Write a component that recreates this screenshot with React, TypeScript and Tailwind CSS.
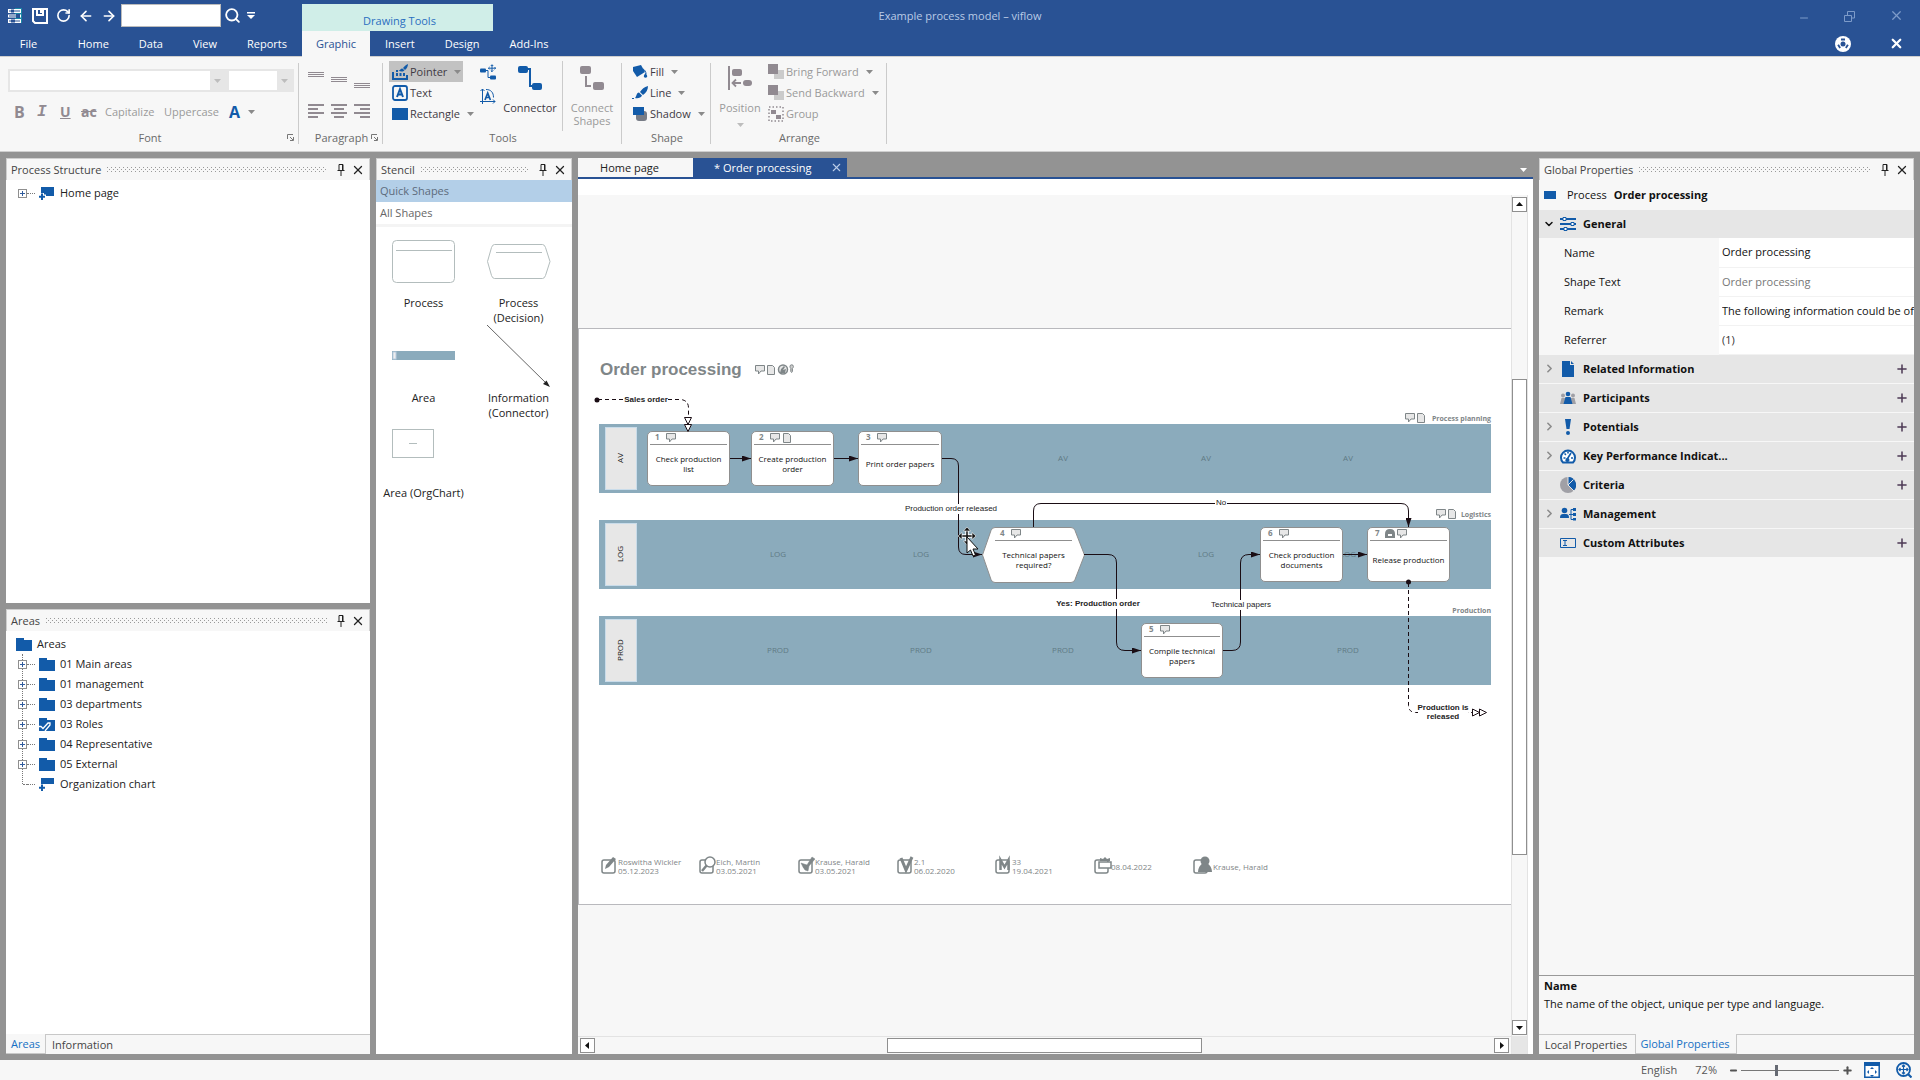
import React from 'react';
import { ArrowLeft, ArrowRight, ChevronDown, ChevronRight, Minus, Plus, RotateCw, Search, X } from 'lucide-react';

const BLUE = '#125ba9';
const GREY = '#918a91';
const INK = '#7f8688';

/* ---------- small shared pieces ---------- */

const Caret = ({ className = 'text-[#8a8a8a]' }: { className?: string }) => (
  <svg width="7" height="4" viewBox="0 0 7 4" className={`shrink-0 ${className}`}>
    <path d="M0 0h7L3.500 4z" fill="currentColor" />
  </svg>
);

const Pin = () => (
  <svg width="8" height="12" viewBox="0 0 8 12">
    <path d="M2 .5h4v6H2zM5.500 1v5M.5 6.500h7M4 7v5" fill="none" stroke="#222" />
  </svg>
);

const Launcher = () => (
  <svg width="7" height="7" viewBox="0 0 7 7">
    <path d="M.5 5V.5H6M3 3l3 3M6.500 3v3.500H3" fill="none" stroke="#777" />
  </svg>
);

const PanelHeader = ({ title }: { title: string }) => {
  const id = `grip-${title.replace(/\s/g, '')}`;
  return (
    <div className="flex h-[22px] shrink-0 items-center border border-b-0 border-[#cfcfcf] bg-[#f7f7f7] pl-1 pr-1 text-[#444]">
      <h2>{title}</h2>
      <svg className="ml-1.5 h-[5px] min-w-0 flex-1">
        <defs>
          <pattern id={id} width="4" height="4" patternUnits="userSpaceOnUse">
            <rect width="1" height="1" fill="#9a9a9a" />
            <rect x="2" y="2" width="1" height="1" fill="#9a9a9a" />
          </pattern>
        </defs>
        <rect width="100%" height="5" fill={`url(#${id})`} />
      </svg>
      <button aria-label={`Pin ${title}`} className="ml-2 p-0.5"><Pin /></button>
      <button aria-label={`Close ${title}`} className="ml-1"><X size={14} strokeWidth={2.2} color="#222" /></button>
    </div>
  );
};

/* ---------- title bar ---------- */

const TitleBar = () => (
  <div className="grid h-[31px] grid-cols-[1fr_auto_1fr] items-center">
    <div className="flex h-full items-center">
      <div className="flex w-[302px] items-center text-white">
        <svg width="16" height="16" viewBox="0 0 16 16" className="ml-[7px]">
          <rect x="8" width="7" height="15" fill="#1b87a6" />
          <path d="M1 1h13v4H1zM1 6.500h13v3H1zM1 11h13v4H1z" fill="#fff" />
          <path d="M2 3h11M2 8h11M2 13h11" stroke="#295294" />
          <path d="M4 1.500h3v3H4zM9 6h4v4H9zM4 11.500h4v3H4z" fill="#295294" />
        </svg>
        <button aria-label="Save" className="ml-[9px]">
          <svg width="16" height="16" viewBox="0 0 16 16" fill="none" stroke="#fff" strokeWidth="2">
            <path d="M1 1h14v14H3l-2-2z" />
            <path d="M5 1v6h6V1" />
            <path d="M9 2v3" />
          </svg>
        </button>
        <button aria-label="Refresh" className="ml-2"><RotateCw size={15} strokeWidth={2.6} /></button>
        <button aria-label="Back" className="ml-[7px]"><ArrowLeft size={16} strokeWidth={2.4} /></button>
        <button aria-label="Forward" className="ml-[7px]"><ArrowRight size={16} strokeWidth={2.4} /></button>
        <input aria-label="Search" className="ml-1 h-[23px] w-[100px] border border-[#bcbcbc] bg-white px-1 text-black" />
        <button aria-label="Find" className="ml-[3px]"><Search size={17} strokeWidth={2.6} /></button>
        <button aria-label="Customize toolbar" className="ml-1.5">
          <svg width="8" height="7" viewBox="0 0 8 7"><path d="M0 0h8v1.500H0zM0 3h8L4 7z" fill="#fff" /></svg>
        </button>
      </div>
      <div className="flex h-[27px] w-[191px] items-center justify-center self-end bg-[#d0eee8] pl-1 pt-1.5 text-[#2b6fc0]">
        Drawing Tools
      </div>
    </div>
    <h1 className="text-[#b9cbe6]">Example process model – viflow</h1>
    <div className="flex items-center justify-end gap-[34px] pr-4 text-[#7d9bc9]">
      <button aria-label="Minimize"><Minus size={12} className="translate-y-0.5" /></button>
      <button aria-label="Restore">
        <svg width="11" height="12" viewBox="0 0 11 12" fill="none" stroke="currentColor">
          <path d="M.5 5.500h7v6h-7zM3.500 5V1.500h7V8H8" />
        </svg>
      </button>
      <button aria-label="Close"><X size={15} strokeWidth={2} /></button>
    </div>
  </div>
);

const mainTabs = ['Home', 'Data', 'View', 'Reports'];
const toolTabs = ['Insert', 'Design', 'Add-Ins'];

const RibbonTabs = () => (
  <nav className="flex h-[26px] items-stretch border-b border-[#cfcfcf] text-white">
    <button className="w-[57px] shrink-0">File</button>
    <div className="flex w-[245px] shrink-0 justify-end">
      {mainTabs.map(tab => (
        <button key={tab} className="px-[15px]">{tab}</button>
      ))}
    </div>
    <button className="-mb-px w-[68px] bg-[#f7f7f7] text-[#295294]">Graphic</button>
    {toolTabs.map(tab => (
      <button key={tab} className="px-[15px]">{tab}</button>
    ))}
    <div className="ml-auto flex items-center gap-[38px] pr-4">
      <button aria-label="Help">
        <svg width="16" height="16" viewBox="0 0 16 16">
          <circle cx="8" cy="8" r="8" fill="#fff" />
          <circle cx="8" cy="8" r="2.500" fill="#295294" />
          <path d="M6 2.600h4v1.800H6zM2.300 9.200l1.600-.9 2 3.200-1.500 1zM13.700 9.200l-1.600-.9-2 3.200 1.500 1z" fill="#295294" />
        </svg>
      </button>
      <button aria-label="Close document"><X size={15} strokeWidth={3.6} /></button>
    </div>
  </nav>
);

/* ---------- ribbon ---------- */

type GroupProps = { label: string; width: string; launcher?: boolean; children: React.ReactNode };

const Group = ({ label, width, launcher, children }: GroupProps) => (
  <div className={`flex shrink-0 ${width}`}>
    <div className="flex min-w-0 flex-1 flex-col pt-1">
      <div className="h-[70px]">{children}</div>
      <div className="relative pl-0.5 text-center leading-[14px] text-[#6a6a6a]">
        {label}
        {launcher && <button aria-label={`${label} settings`} className="absolute bottom-1 right-1"><Launcher /></button>}
      </div>
    </div>
    <div className="mt-1.5 h-[81px] w-px bg-[#cbcbcb]" />
  </div>
);

const FontSelect = ({ label, width }: { label: string; width: string }) => (
  <div className={`relative border-2 border-[#e6e6e6] bg-white ${width}`}>
    <select aria-label={label} disabled className="h-[19px] w-full appearance-none" />
    <span className="pointer-events-none absolute inset-y-0 right-0 flex w-[15px] items-center justify-center bg-[#e6e6e6]">
      <Caret className="text-[#bdbdbd]" />
    </span>
  </div>
);

/* each entry lists the widths of the lines in one alignment glyph */
const Lines = ({ widths, step, thick, align }: { widths: number[]; step: number; thick: number; align: 'l' | 'c' | 'r' }) => (
  <svg width="16" height="16" viewBox="0 0 16 16">
    {widths.map((w, i) => (
      <rect key={i} x={align === 'l' ? 0 : align === 'c' ? (16 - w) / 2 : 16 - w} y={1 + i * step} width={w} height={thick} fill={GREY} />
    ))}
  </svg>
);

const Folder = () => (
  <svg width="16" height="13" viewBox="0 0 16 13"><path d="M0 0h8v2h8v11H0z" fill={BLUE} /></svg>
);

type ToolProps = { icon: React.ReactNode; label: string; menu?: boolean; active?: boolean; disabled?: boolean };

const Tool = ({ icon, label, menu, active, disabled }: ToolProps) => (
  <button
    disabled={disabled}
    className={`flex h-[21px] items-center whitespace-nowrap pl-[3px] pr-0.5 ${active ? 'bg-[#c2c2c2]' : ''} ${disabled ? 'text-[#9a9a9a]' : 'text-[#3f3a44]'}`}
  >
    <span className="flex w-4 justify-center">{icon}</span>
    <span className="ml-0.5">{label}</span>
    {menu && <span className="ml-[7px]"><Caret /></span>}
  </button>
);

const ConnectorIcon = ({ color }: { color: string }) => (
  <svg width="26" height="26" viewBox="0 0 26 26" fill={color}>
    <rect x="1" y="1" width="10" height="7" rx="2" />
    <rect x="15" y="18" width="10" height="7" rx="2" />
    <path d="M10 4h3v17h4" fill="none" stroke={color} strokeWidth="2" />
  </svg>
);

const Ribbon = () => (
  <div className="flex h-[95px] overflow-hidden border-b border-[#cfcfcf] bg-[#f7f7f7]">
    <Group label="Font" width="w-[299px]" launcher>
      <div className="flex pl-2 pt-2">
        <FontSelect label="Font family" width="w-[219px]" />
        <FontSelect label="Font size" width="w-[67px]" />
      </div>
      <div className="mt-2 flex h-[24px] items-center pl-[14px] text-[#9a9a9a]">
        <button aria-label="Bold" className="w-[23px] text-left text-base font-bold leading-none text-[#918a91]">B</button>
        <button aria-label="Italic" className="w-[23px] text-left font-mono text-base font-bold italic leading-none text-[#918a91]">I</button>
        <button aria-label="Underline" className="w-[21px] text-left text-sm font-bold leading-none text-[#918a91] underline">U</button>
        <button aria-label="Strikethrough" className="w-[24px] text-left text-sm font-bold leading-none text-[#918a91] line-through">ac</button>
        <button className="w-[59px] text-left">Capitalize</button>
        <button className="w-[65px] text-left">Uppercase</button>
        <button aria-label="Font color" className="flex items-center gap-2 text-base font-bold leading-none text-[#125ba9]">
          A <Caret />
        </button>
      </div>
    </Group>

    <Group label="Paragraph" width="w-[84px]" launcher>
      <div className="flex h-[34px] items-start justify-center gap-[7px] pr-1 pt-2.5">
        <button aria-label="Align top"><Lines widths={[16, 16, 16]} step={2} thick={1} align="l" /></button>
        <button aria-label="Align middle" className="pt-[5px]"><Lines widths={[16, 16, 16]} step={2} thick={1} align="l" /></button>
        <button aria-label="Align bottom" className="pt-[11px]"><Lines widths={[16, 16, 16]} step={2} thick={1} align="l" /></button>
      </div>
      <div className="mt-2 flex justify-center gap-[7px] pr-1">
        <button aria-label="Align left"><Lines widths={[16, 10, 16, 10]} step={4} thick={2} align="l" /></button>
        <button aria-label="Align center"><Lines widths={[16, 10, 16, 10]} step={4} thick={2} align="c" /></button>
        <button aria-label="Align right"><Lines widths={[16, 10, 16, 10]} step={4} thick={2} align="r" /></button>
      </div>
    </Group>

    <Group label="Tools" width="w-[239px]">
      <div className="flex">
        <div className="flex w-[97px] flex-col items-start pl-1.5">
          <Tool active menu label="Pointer" icon={
            <svg width="16" height="16" viewBox="0 0 16 16" fill={BLUE}>
              <path d="M1 8v7h14v-4" fill="none" stroke={BLUE} strokeWidth="2" />
              <path d="M4 9h2v3H4zM4 6h2v2H4zM7.500 9h2v3h-2zM11 9h2v3h-2zM16 0c-2 1-4 2.500-5 4l2 2c2-1.500 3-4 3-6zM10.300 4.500c-2 0-1.800 2-3.800 2 2 1.500 4.800 1.500 6-.2z" />
            </svg>
          } />
          <Tool label="Text" icon={
            <svg width="16" height="16" viewBox="0 0 16 16">
              <rect x="1" y="1" width="14" height="14" rx="2" fill="none" stroke={BLUE} strokeWidth="1.800" />
              <path d="M5 12l3-8 3 8M6 9.500h4" fill="none" stroke={BLUE} strokeWidth="2" />
            </svg>
          } />
          <Tool menu label="Rectangle" icon={<svg width="16" height="12"><rect width="16" height="12" fill={BLUE} /></svg>} />
        </div>
        <div className="flex w-[18px] flex-col gap-2 pt-[3px]">
          <button aria-label="Move connector">
            <svg width="16" height="16" viewBox="0 0 16 16" fill={BLUE}>
              <rect y="4.500" width="6" height="4" rx="1" />
              <rect x="10" y="11.500" width="6" height="4" rx="1" />
              <path d="M6 6.500h2v7h2M12 1v6.500M8.500 4.200h7M10.800 2L12 .7 13.200 2M10.800 6.500L12 7.700l1.200-1.200M9.600 3L8.400 4.200l1.200 1.200M14.500 3l1.200 1.200-1.200 1.200" fill="none" stroke={BLUE} />
            </svg>
          </button>
          <button aria-label="Rotate text">
            <svg width="16" height="16" viewBox="0 0 16 16" fill="none" stroke={BLUE}>
              <path d="M2.500 16V1M.5 3l2-2 2 2M0 13.500h15M13 11.500l2 2-2 2M6 1.500c5 0 7.500 3 7.500 8" />
              <path d="M5 12l2.700-7 2.700 7M6 9.500h3.500" strokeWidth="1.700" />
            </svg>
          </button>
        </div>
        <button className="flex w-[64px] flex-col items-center pt-1 text-[#3f3a44]">
          <ConnectorIcon color={BLUE} />
          <span className="mt-2.5 leading-[14px]">Connector</span>
        </button>
        <div className="h-[70px] w-px bg-[#cbcbcb]" />
        <button disabled className="flex flex-1 flex-col items-center pt-1 text-[#9a9a9a]">
          <svg width="26" height="26" viewBox="0 0 26 26" fill={GREY}>
            <rect x="1" y="1" width="11" height="8" rx="2" />
            <rect x="14" y="17" width="11" height="8" rx="2" />
            <path d="M7 11v10h5" fill="none" stroke={GREY} strokeWidth="2" />
          </svg>
          <span className="mt-2.5 leading-[13px]">Connect<br />Shapes</span>
        </button>
      </div>
    </Group>

    <Group label="Shape" width="w-[89px]">
      <div className="flex flex-col items-start pl-[7px]">
        <Tool menu label="Fill" icon={
          <svg width="16" height="14" viewBox="0 0 16 14" fill={BLUE}>
            <path d="M1 2l8-2 4 7-8 5-4-6z" />
            <path d="M11 4c2 1 3 3 3 5" fill="none" stroke={BLUE} />
            <path d="M13.500 8c1.500 2 2 3 1.500 4a1.800 1.800 0 0 1-3 0c-.5-1 .3-2.500 1.500-4z" />
          </svg>
        } />
        <Tool menu label="Line" icon={
          <svg width="16" height="14" viewBox="0 0 16 14" fill={BLUE}>
            <path d="M16 0c-4 1-6 3-8 6l3 3c3-2 5-5 5-9zM7 6.500C4 7 5 10 3 12c3 .5 6 0 7-2.500zM0 12h2v1H0z" />
          </svg>
        } />
        <Tool menu label="Shadow" icon={
          <svg width="16" height="16" viewBox="0 0 16 16">
            <rect x="4" y="5" width="11" height="10" rx="3" fill="#777c86" />
            <rect x="1" y="1" width="11" height="8" fill={BLUE} />
          </svg>
        } />
      </div>
    </Group>

    <Group label="Arrange" width="w-[176px]">
      <div className="flex">
        <button disabled className="flex w-[54px] flex-col items-center pl-1 pt-1 text-[#9a9a9a]">
          <svg width="26" height="26" viewBox="0 0 26 26" fill={GREY}>
            <path d="M1 1h2v24H1z" />
            <rect x="5" y="4" width="10" height="7" rx="2" />
            <rect x="16" y="15" width="9" height="6" rx="3" />
            <path d="M14 18H6M9 14.500L5.500 18 9 21.500" fill="none" stroke={GREY} strokeWidth="1.800" />
          </svg>
          <span className="mb-2 mt-2.5 leading-[14px]">Position</span>
          <Caret className="text-[#bdbdbd]" />
        </button>
        <div className="flex flex-col items-start">
          {['Bring Forward', 'Send Backward'].map(label => (
            <Tool key={label} disabled menu label={label} icon={
              <svg width="16" height="15" viewBox="0 0 16 15">
                <rect x="6" y="6" width="10" height="9" fill="#cbcbcb" />
                <rect width="10" height="10" fill={GREY} />
              </svg>
            } />
          ))}
          <Tool disabled label="Group" icon={
            <svg width="16" height="16" viewBox="0 0 16 16" fill={GREY}>
              <rect x="1" y="1" width="14" height="14" fill="none" stroke={GREY} strokeWidth="1.500" strokeDasharray="1.500 2" />
              <rect x="3" y="4" width="5" height="4" />
              <rect x="8" y="9" width="5" height="4" />
            </svg>
          } />
        </div>
      </div>
    </Group>
  </div>
);

/* ---------- left panels ---------- */

const PageIcon = ({ height }: { height: number }) => (
  <svg width="16" height="13" viewBox="0 0 16 13">
    <path d={`M2 0h13v${height}H2z`} fill={BLUE} />
    <path d="M3 6v7M0 9.500h7" stroke="#fff" strokeWidth="4" />
    <path d="M3 6.500V13M0 9.800h6" stroke={BLUE} strokeWidth="2" />
  </svg>
);

const Expander = () => (
  <svg width="9" height="9" viewBox="0 0 9 9" className="relative bg-white">
    <rect x=".5" y=".5" width="8" height="8" fill="none" stroke="#8f8f8f" />
    <path d="M2 4.500h5M4.500 2v5" stroke="#2f5b9c" />
  </svg>
);

const areas = ['01 Main areas', '01 management', '03 departments', '03 Roles', '04 Representative', '05 External', 'Organization chart'];

const AreaIcon = ({ name }: { name: string }) => {
  if (name === 'Organization chart') return <PageIcon height={6} />;
  if (name !== '03 Roles') return <Folder />;
  return (
    <svg width="16" height="13" viewBox="0 0 16 13">
      <path d="M0 0h8v2h8v11H0z" fill={BLUE} />
      <path d="M-1 8.500h3l2 2 5-5.500h2v2l-5 6" fill="none" stroke="#fff" strokeWidth="1.300" />
    </svg>
  );
};

const AreasPanel = () => (
  <section className="flex min-h-0 flex-1 flex-col bg-white">
    <PanelHeader title="Areas" />
    <div className="flex-1 pl-2.5 pt-[3px]">
      <div className="flex h-5 items-center gap-[5px]"><Folder />Areas</div>
      <ul className="relative">
        <li aria-hidden className="absolute bottom-2.5 left-1.5 top-0 border-l border-dotted border-[#777]" />
        {areas.map(name => (
          <li key={name} className="flex h-5 items-center pl-0.5">
            <span className="flex w-[9px] justify-end">
              {name === 'Organization chart'
                ? <span className="w-1 border-t border-dotted border-[#777]" />
                : <button aria-label={`Expand ${name}`}><Expander /></button>}
            </span>
            <span className="mr-1 w-2 border-t border-dotted border-[#777]" />
            <AreaIcon name={name} />
            <span className="ml-[5px]">{name}</span>
          </li>
        ))}
      </ul>
    </div>
    <div className="flex h-[20px] bg-[#f7f7f7]">
      <button className="w-[40px] border-b border-r border-[#c8c8c8] text-[#1570c4]">Areas</button>
      <button className="flex-1 border-t border-[#c8c8c8] pl-1.5 text-left text-[#444]">Information</button>
    </div>
  </section>
);

const stencils: { label: string; art: React.ReactNode }[] = [
  {
    label: 'Process',
    art: (
      <g fill="none" stroke="#b3bdbd">
        <rect x="1.500" y="10.500" width="62" height="42" rx="4" />
        <path d="M5 20.500h56" />
      </g>
    ),
  },
  {
    label: 'Process (Decision)',
    art: <path d="M8.500 14.500h48q2 0 3 3l4.500 14-4.500 14q-1 3-3 3h-48q-2 0-3-3L1.500 31.500l4-14q1-3 3-3zM10 22.500h46" fill="none" stroke="#b3bdbd" />,
  },
  {
    label: 'Area',
    art: (
      <>
        <rect x="1" y="26" width="63" height="9" fill="#8babbc" />
        <rect x="2" y="27" width="3" height="7" fill="#eee" stroke="#b9cde0" />
      </>
    ),
  },
  {
    label: 'Information (Connector)',
    art: (
      <>
        <path d="M1 0l60 59" stroke="#666" />
        <path d="M64 62l-7-3 3.500-3.500z" fill="#222" />
      </>
    ),
  },
  {
    label: 'Area (OrgChart)',
    art: (
      <g fill="none" stroke="#b3bdbd">
        <rect x="1.500" y="9.500" width="41" height="28" />
        <path d="M18 23.500h8" />
      </g>
    ),
  },
];

const StencilPanel = () => (
  <section className="flex w-[196px] shrink-0 flex-col bg-white">
    <PanelHeader title="Stencil" />
    <button className="h-[22px] bg-[#b3cfe8] pl-1 text-left text-[#5d6b7c]">Quick Shapes</button>
    <button className="h-[22px] pl-1 text-left text-[#666]">All Shapes</button>
    <div className="h-[3px] bg-[#f4f4f4]" />
    <div className="grid grid-cols-[95px_95px] pt-[3px]">
      {stencils.map(({ label, art }) => (
        <button key={label} className="flex h-[95px] flex-col items-center">
          <svg width="65" height="65" viewBox="0 0 65 65" className="shrink-0">{art}</svg>
          <span className="w-[88px] leading-[15px]">{label}</span>
        </button>
      ))}
    </div>
  </section>
);

/* ---------- diagram ---------- */

const Bubble = ({ x, y }: { x: number; y: number }) => (
  <path transform={`translate(${x} ${y})`} d="M.5 .5h9v5.500H6L3.500 9V6h-3z" fill="#e7e7e7" stroke={INK} />
);

const Doc = ({ x, y }: { x: number; y: number }) => (
  <path transform={`translate(${x} ${y})`} d="M.5 .5h5l2 2v7h-7z" fill="#e7e7e7" stroke={INK} />
);

const lanes = [
  { code: 'AV', title: 'Process planning', y: 96, iconX: 827, marks: [485, 628, 770] },
  { code: 'LOG', title: 'Logistics', y: 192, iconX: 858, marks: [200, 343, 628, 770] },
  { code: 'PROD', title: 'Production', y: 288, iconX: 0, marks: [200, 343, 485, 770] },
];

const steps = [
  { n: 1, x: 69, y: 103, w: 83, text: ['Check production', 'list'] },
  { n: 2, x: 173, y: 103, w: 83, text: ['Create production', 'order'] },
  { n: 3, x: 280, y: 103, w: 84, text: ['Print order papers'] },
  { n: 4, x: 414, y: 199, w: 83, text: ['Technical papers', 'required?'] },
  { n: 5, x: 563, y: 295, w: 82, text: ['Compile technical', 'papers'] },
  { n: 6, x: 682, y: 199, w: 83, text: ['Check production', 'documents'] },
  { n: 7, x: 789, y: 199, w: 83, text: ['Release production'] },
];

const links = [
  'M152 130.500H173',
  'M256 130.500H280',
  'M364 130.500H373Q380.500 130.500 380.500 138V219Q380.500 226.500 388 226.500H404',
  'M455.500 199V183Q455.500 175.500 463 175.500H823Q830.500 175.500 830.500 183V199',
  'M506 226.500H530Q538.500 226.500 538.500 235V314Q538.500 322.500 547 322.500H563',
  'M645 322.500H654Q662.500 322.500 662.500 314V235Q662.500 226.500 671 226.500H682',
  'M765 226.500H789',
];

const linkLabels = [
  { x: 68, y: 74, w: 42, bold: true, text: ['Sales order'] },
  { x: 373, y: 183, w: 92, text: ['Production order released'] },
  { x: 643, y: 177, w: 12, text: ['No'] },
  { x: 520, y: 278, w: 84, bold: true, text: ['Yes: Production order'] },
  { x: 663, y: 279, w: 60, text: ['Technical papers'] },
  { x: 865, y: 382, w: 50, bold: true, text: ['Production is', 'released'] },
];

const signoffs = [
  { x: 23, lines: ['Roswitha Wickler', '05.12.2023'], art: <path d="M4 12l1-4 7-8 3 2-7 8z" fill={INK} /> },
  {
    x: 121,
    lines: ['Eich, Martin', '03.05.2021'],
    art: (
      <g fill="#fff" stroke={INK}>
        <path d="M8 8l-5 6" strokeWidth="2.500" />
        <circle cx="11" cy="5" r="5" strokeWidth="1.500" />
      </g>
    ),
  },
  { x: 220, lines: ['Krause, Harald', '03.05.2021'], art: <path d="M3 6l3 1 3 1 5-8 3 2-6 7-1 5-3-1-2-3zM5 10l3 3" fill={INK} stroke={INK} strokeWidth=".5" /> },
  { x: 319, lines: ['2.1', '06.02.2020'], art: <path d="M4 1l5 12 6-13" fill="none" stroke={INK} strokeWidth="3" /> },
  { x: 417, lines: ['33', '19.04.2021'], art: <path d="M5.500 13V3l4 7 4-7v10" fill="none" stroke={INK} strokeWidth="2.500" /> },
  {
    x: 516,
    lines: ['08.04.2022'],
    art: (
      <>
        <path d="M5 5h12v6H5z" fill="#fff" stroke={INK} strokeWidth="1.500" />
        <path d="M6 1l3 1 2-2 2 2 3-1v3H6z" fill={INK} />
      </>
    ),
  },
  {
    x: 615,
    lines: ['Krause, Harald'],
    art: (
      <g fill={INK}>
        <circle cx="12" cy="4" r="4.500" />
        <path d="M10 6h4c3 2 5 5 5 9H5c0-4 2-7 5-9z" />
      </g>
    ),
  },
];

const Diagram = () => (
  <svg className="block h-[575px] w-full" fontSize="8">
    <defs>
      <marker id="arrow" viewBox="0 0 9 6" markerWidth="9" markerHeight="6" markerUnits="userSpaceOnUse" refX="9" refY="3" orient="auto">
        <path d="M0 0l9 3-9 3z" fill="#1a0d14" />
      </marker>
    </defs>
    <g transform="translate(-1 -1)">
      <text x="22" y="47" fontSize="17" fontWeight="700" fill={INK} className="font-['Liberation_Sans',sans-serif]">Order processing</text>
      <Bubble x={177} y={37} />
      <Doc x={189} y={37} />
      <circle cx="205" cy="41.500" r="4.500" fill="#e7e7e7" stroke={INK} strokeWidth="1.500" />
      <path d="M202 45l1-4 3-3 1 1-2 3 3-1-1 4z" fill={INK} />
      <path d="M212 38.500a1.700 1.700 0 1 1 3.400 0q0 1-1 2v3l-.8 1-.8-1v-3q-.8-1-.8-2z" fill="#ccc" stroke={INK} />

      {lanes.map(({ code, title, y, iconX, marks }) => (
        <g key={code}>
          <rect x="21" y={y} width="892" height="69" fill="#8babbc" />
          <rect x="27.500" y={y + 3.5} width="31" height="62" fill="#e7e7e7" stroke="#c9dcea" />
          <text transform={`translate(45 ${y + 34}) rotate(-90)`} textAnchor="middle" fill="#222">{code}</text>
          {marks.map(x => (
            <text key={x} x={x} y={y + 37} textAnchor="middle" fill="#5f7a84">{code}</text>
          ))}
          <text x="913" y={y - 3} textAnchor="end" fontSize="7" fontWeight="700" fill={INK}>{title}</text>
          {iconX > 0 && <Bubble x={iconX} y={y - 11} />}
          {iconX > 0 && <Doc x={iconX + 12} y={y - 11} />}
        </g>
      ))}

      {steps.map(({ n, x, y, w, text }) => (
        <g key={n}>
          {n === 4 ? (
            <path d="M417 199.500h76q3 0 4 3l9.500 24.500-9.500 24.500q-1 3-4 3h-76q-3 0-4-3L404.500 227l8.500-24.500q1-3 4-3z" fill="#fff" stroke="#8f8f8f" />
          ) : (
            <rect x={x + 0.5} y={y + 0.5} width={w - 1} height="54" rx="4.500" fill="#fff" stroke="#8f8f8f" />
          )}
          <path d={`M${x + 3} ${y + 13.5}h${w - 6}`} stroke="#8f8f8f" />
          <text x={x + 8} y={y + 9} fontWeight="700" fill={INK}>{n}</text>
          <Bubble x={n === 7 ? x + 30 : x + 19} y={y + 2} />
          {n === 2 && <Doc x={x + 32} y={y + 2} />}
          {n === 7 && (
            <>
              <path d={`M${x + 18} ${y + 11}v-4q0-5 5-5t5 5v4z`} fill={INK} />
              <path d={`M${x + 21} ${y + 7}h4v2h-4z`} fill="#fff" />
            </>
          )}
          {text.map((line, i) => (
            <text key={line} x={x + w / 2} y={y + (text.length === 1 ? 36 : 31 + i * 10)} textAnchor="middle" fill="#111">{line}</text>
          ))}
        </g>
      ))}

      <g fill="none" stroke="#1a0d14">
        {links.map(d => <path key={d} d={d} markerEnd="url(#arrow)" />)}
        <path d="M20 71.500H103Q110.500 72.500 110.500 80V89" strokeDasharray="4 3" />
        <path d="M830.500 255V377Q830.500 384.500 838 384.500H895" strokeDasharray="4 3" />
        <path d="M106.500 89.500h7l-3.500 7zM106.500 96.500h7l-3.500 7z" fill="#fff" />
        <path d="M894.500 381v7l7-3.500zM901.500 381v7l7-3.500z" fill="#fff" />
      </g>
      <circle cx="19" cy="72" r="2.500" fill="#1a0d14" />
      <circle cx="830.500" cy="254" r="2.500" fill="#1a0d14" />

      {linkLabels.map(({ x, y, w, bold, text }) => (
        <g key={text[0]} className="font-['Liberation_Sans',sans-serif]" textAnchor="middle" fontWeight={bold ? 700 : 400} fill="#222">
          {/* clears the line behind the caption */}
          <rect x={x - w / 2} y={y - 7} width={w} height={text.length * 10} fill="#fff" />
          {text.map((line, i) => (
            <text key={line} x={x} y={y + i * 9}>{line}</text>
          ))}
        </g>
      ))}

      {signoffs.map(({ x, lines, art }) => (
        <g key={x} transform={`translate(${x} 529)`} fill={INK}>
          <rect x="1" y="3" width="13" height="13" rx="2" fill="none" stroke={INK} strokeWidth="1.500" />
          {art}
          {lines.map((line, row) => (
            <text key={line} x={x === 615 ? 20 : 17} y={lines.length === 1 ? 13 : 8 + row * 9}>{line}</text>
          ))}
        </g>
      ))}

      {/* move pointer */}
      <g transform="translate(389 208)">
        <g fill="none" stroke="#fff" strokeWidth="3.500">
          <path d="M-7 0H7M0-7V7" />
        </g>
        <path d="M-6 0H6M0-6V6" stroke="#111" strokeWidth="1.500" />
        <path d="M0-9l3.500 4h-7zM0 9l3.500-4h-7zM-9 0l4-3.500v7zM9 0L5-3.500v7z" fill="#111" stroke="#fff" strokeWidth=".6" />
        <path d="M0 1v16l3.500-3 2.500 6 2.500-1-2.500-6h5z" fill="#fff" stroke="#111" />
      </g>
    </g>
  </svg>
);

/* ---------- centre column ---------- */

const ScrollButton = ({ label, d }: { label: string; d: string }) => (
  <button aria-label={label} className="flex size-[15px] shrink-0 items-center justify-center border border-[#8f8f8f] bg-white">
    <svg width="7" height="7" viewBox="0 0 7 7"><path d={d} fill="#111" /></svg>
  </button>
);

const Workspace = () => (
  <main className="flex min-w-0 flex-1 flex-col bg-white">
    <div className="flex h-[21px] shrink-0 items-stretch border-b-2 border-[#295294] bg-[#939393] text-[11px]">
      <button className="w-[115px] bg-[#f7f7f7] pr-3 text-[#222]">Home page</button>
      <div className="flex w-[154px] items-center justify-between bg-[#295294] pl-[21px] pr-1 text-white">
        <button>* Order processing</button>
        <button aria-label="Close tab"><X size={13} color="#bccde8" /></button>
      </div>
      <button aria-label="List tabs" className="ml-auto pr-1.5 pt-1"><Caret className="text-white" /></button>
    </div>
    <div className="flex min-h-0 flex-1 pr-[5px] pt-4">
      <div className="flex min-w-0 flex-1 flex-col bg-[#f7f7f7]">
        <div className="min-h-0 flex-1 overflow-hidden pt-[133px]">
          <div className="border-y border-l border-[#b9b9bd] bg-white"><Diagram /></div>
        </div>
        <div className="flex h-[18px] shrink-0 items-center border-t border-[#e3e3e3] px-0.5">
          <ScrollButton label="Scroll left" d="M5 0v7L1 3.500z" />
          <div className="flex h-[15px] flex-1 justify-center">
            <div className="w-[35%] border border-[#8f8f8f] bg-white" />
          </div>
          <ScrollButton label="Scroll right" d="M2 0v7l4-3.500z" />
        </div>
      </div>
      <div className="flex w-[17px] shrink-0 flex-col items-center border-x border-[#e3e3e3] bg-[#f7f7f7] pt-0.5">
        <ScrollButton label="Scroll up" d="M0 5h7L3.500 1z" />
        <div className="flex w-[15px] flex-1 flex-col">
          <div className="flex-[168]" />
          <div className="flex-[476] border border-[#8f8f8f] bg-white" />
          <div className="flex-[166]" />
        </div>
        <ScrollButton label="Scroll down" d="M0 2h7L3.500 6z" />
        <div className="mt-px h-[18px] w-full bg-[#e6e6e6]" />
      </div>
    </div>
  </main>
);

/* ---------- properties ---------- */

const properties = [
  { name: 'Name', value: 'Order processing', tone: 'text-[#111]' },
  { name: 'Shape Text', value: 'Order processing', tone: 'text-[#777]' },
  { name: 'Remark', value: 'The following information could be of interest', tone: 'text-[#111]' },
  { name: 'Referrer', value: '(1)', tone: 'text-[#333]' },
];

const sections: { name: string; expand?: boolean; add?: boolean; art: React.ReactNode }[] = [
  { name: 'Related Information', expand: true, add: true, art: <path d="M2 0h8v4h4v12H2zM11 0l3 3h-3z" fill={BLUE} /> },
  {
    name: 'Participants',
    add: true,
    art: (
      <>
        <g fill="#a0a0a6">
          <circle cx="3" cy="5.500" r="2" />
          <circle cx="13" cy="5.500" r="2" />
          <path d="M0 14l1.500-6h4L5 14zM16 14l-1.500-6h-4l.5 6z" />
        </g>
        <g fill={BLUE}>
          <circle cx="8" cy="4" r="2.300" />
          <path d="M3.500 14l2-7h5l2 7z" />
        </g>
      </>
    ),
  },
  { name: 'Potentials', expand: true, add: true, art: <path d="M5 0h6L9.500 10h-3zM8 12a2 2 0 1 1 0 4 2 2 0 0 1 0-4z" fill={BLUE} /> },
  {
    name: 'Key Performance Indicat...',
    expand: true,
    add: true,
    art: (
      <>
        <path d="M3 14.500A7 7 0 1 1 13 14.500z" fill="#fff" stroke={BLUE} strokeWidth="2" />
        <path d="M6 13l5-8M3.500 10h2M4.500 5.500l1.500 1.300M8 3.500v2M11 10h2" stroke={BLUE} strokeWidth="1.600" />
        <circle cx="7.500" cy="12" r="2" fill={BLUE} />
      </>
    ),
  },
  {
    name: 'Criteria',
    add: true,
    art: (
      <>
        <circle cx="8" cy="8" r="8" fill="#a0a0a6" />
        <path d="M8 0a8 8 0 0 1 5.700 13.700L8 8z" fill={BLUE} />
        <path d="M8 0v8l6 6M8 8l5.500-5.500" fill="none" stroke="#e6e6e6" />
      </>
    ),
  },
  {
    name: 'Management',
    expand: true,
    art: (
      <g fill={BLUE}>
        <circle cx="4.500" cy="4.500" r="2.800" />
        <path d="M0 12c0-3 1-4 3-4h3c2 0 3 1 3 4zM13 2h3v3h-3zM13 7h3v3h-3zM13 12h3v2.500h-3z" />
        <path d="M13 3.500h-2v10h2M9 8.500h4" fill="none" stroke={BLUE} />
      </g>
    ),
  },
  {
    name: 'Custom Attributes',
    add: true,
    art: <path d="M.5 3.500h15v9H.5zM3 5.500h4M3 10.500h4M5 5.500v5" fill="none" stroke={BLUE} />,
  },
];

const PropertiesPanel = () => (
  <section className="flex w-[375px] shrink-0 flex-col bg-[#f7f7f7] text-[#111]">
    <PanelHeader title="Global Properties" />
    <div className="flex h-[30px] items-center pl-[5px]">
      <svg width="12" height="8"><rect width="12" height="8" fill={BLUE} /></svg>
      <span className="ml-[11px]">Process</span>
      <strong className="ml-[7px] font-bold">Order processing</strong>
    </div>
    <button className="flex h-7 items-center bg-[#e6e6e6] pl-1 font-bold">
      <ChevronDown size={12} strokeWidth={3} />
      <svg width="16" height="16" viewBox="0 0 16 16" className="ml-[5px]">
        <path d="M0 3h16M0 8h16M0 13h16" stroke={BLUE} strokeWidth="1.800" />
        <path d="M3 1.500h3v3H3zM11 6.500h3v3h-3zM4 11.500h3v3H4z" fill="#fff" stroke={BLUE} />
      </svg>
      <span className="ml-[7px]">General</span>
    </button>
    <table className="w-full table-fixed border-collapse">
      <tbody>
        {properties.map(({ name, value, tone }) => (
          <tr key={name} className="h-[29px]">
            <th scope="row" className="w-[180px] p-0 pl-[25px] text-left font-normal">
              <label htmlFor={`prop-${name}`}>{name}</label>
            </th>
            <td className="border-b border-[#f2f2f2] bg-white p-0 pl-[3px]">
              <input id={`prop-${name}`} defaultValue={value} className={`block w-full ${tone}`} />
            </td>
          </tr>
        ))}
      </tbody>
    </table>
    {sections.map(({ name, expand, add, art }) => (
      <div key={name} className="flex h-[29px] items-center border-b border-[#f7f7f7] bg-[#e6e6e6] pl-1 pr-[5px]">
        <span className="w-[17px]">
          {expand && <button aria-label={`Expand ${name}`} className="block"><ChevronRight size={13} strokeWidth={3} color="#8c8c8c" /></button>}
        </span>
        <svg width="16" height="16" viewBox="0 0 16 16">{art}</svg>
        <h3 className="ml-[7px] flex-1 font-bold">{name}</h3>
        {add && <button aria-label={`Add to ${name}`}><Plus size={14} strokeWidth={2.6} color="#4d3a55" /></button>}
      </div>
    ))}
    <div className="flex-1" />
    <div className="h-[59px] border-t border-[#999] pl-[5px] pt-px leading-[18px]">
      <p className="font-bold">Name</p>
      <p>The name of the object, unique per type and language.</p>
    </div>
    <div className="flex h-[20px]">
      <button className="w-[97px] border-r border-t border-[#c8c8c8] pr-0.5 text-[#444]">Local Properties</button>
      <button className="w-[101px] border-b border-r border-[#c8c8c8] pr-0.5 text-[#1570c4]">Global Properties</button>
      <div className="flex-1 border-t border-[#c8c8c8]" />
    </div>
  </section>
);

const StatusBar = () => (
  <footer className="flex h-5 shrink-0 items-center justify-end bg-[#f7f7f7] pr-2 text-[#555]">
    <span>English</span>
    <span className="ml-[18px]">72%</span>
    <button aria-label="Zoom out" className="ml-3"><Minus size={9} strokeWidth={5} /></button>
    <input
      type="range"
      aria-label="Zoom"
      min={0}
      max={100}
      defaultValue={36}
      className="mx-[3px] h-3 w-[98px] appearance-none bg-[linear-gradient(#777,#777)] bg-[length:100%_1px] bg-center bg-no-repeat [&::-webkit-slider-thumb]:h-[11px] [&::-webkit-slider-thumb]:w-[3px] [&::-webkit-slider-thumb]:appearance-none [&::-webkit-slider-thumb]:bg-[#666a73]"
    />
    <button aria-label="Zoom in"><Plus size={11} strokeWidth={4.5} /></button>
    <button aria-label="Fit page" className="ml-[11px]">
      <svg width="16" height="16" viewBox="0 0 16 16">
        <path d="M.8 2h14.400v13.200H.8z" fill="#fff" stroke={BLUE} strokeWidth="1.500" />
        <path d="M0 0h16v4H0z" fill={BLUE} />
        <path d="M8 5l2 2H6zM8 15l2-2H6zM3 10l2-2v4zM13 10l-2-2v4z" fill={BLUE} />
      </svg>
    </button>
    <button aria-label="Zoom to selection" className="ml-4">
      <svg width="16" height="16" viewBox="0 0 16 16" fill="none" stroke={BLUE}>
        <circle cx="7.500" cy="7.500" r="6.500" strokeWidth="1.800" />
        <path d="M12 12l3.500 3.500" strokeWidth="2.200" />
        <path d="M7.500 3v9M3 7.500h9M6 4.500L7.500 3 9 4.500M6 10.500L7.500 12 9 10.500M4.500 6L3 7.500 4.500 9M10.500 6L12 7.500 10.500 9" strokeWidth="1.200" />
      </svg>
    </button>
  </footer>
);

const App: React.FC = () => (
  <div className="flex h-screen flex-col bg-[#939393] font-['Open_Sans',sans-serif] text-[11px] leading-4 text-[#222]">
    <header className="shrink-0 bg-[#295294]">
      <TitleBar />
      <RibbonTabs />
      <Ribbon />
    </header>
    <div className="flex min-h-0 flex-1 gap-1.5 p-1.5">
      <div className="flex w-[364px] shrink-0 flex-col gap-1.5">
        <section className="min-h-0 flex-1 bg-white">
          <PanelHeader title="Process Structure" />
          <div className="flex h-[22px] items-center pl-3 pt-1">
            <button aria-label="Expand Home page"><Expander /></button>
            <span className="mr-1 w-2 border-t border-dotted border-[#777]" />
            <PageIcon height={9} />
            <span className="ml-[5px]">Home page</span>
          </div>
        </section>
        <AreasPanel />
      </div>
      <StencilPanel />
      <Workspace />
      <PropertiesPanel />
    </div>
    <StatusBar />
  </div>
);

export default App;
